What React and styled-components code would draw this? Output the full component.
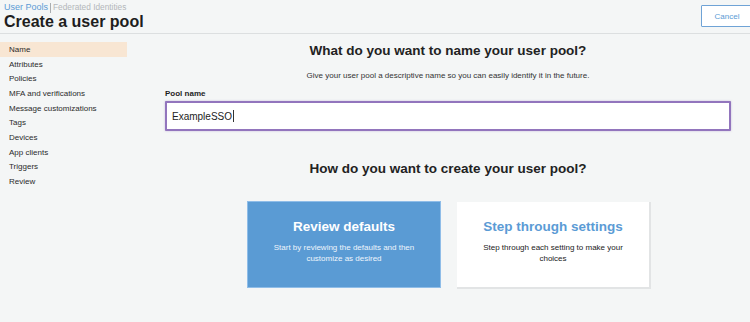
import React from "react";
import styled, { createGlobalStyle } from "styled-components";

const Global = createGlobalStyle`
  html, body { margin: 0; padding: 0; }
  body {
    background: #f4f6f6;
    font-family: "Liberation Sans", Arial, sans-serif;
    color: #222;
    overflow: hidden;
  }
`;

const Page = styled.div`
  width: 750px;
  height: 322px;
  display: flex;
  flex-direction: column;
`;

const Header = styled.header`
  height: 33px;
  border-bottom: 1px solid #dcdfe0;
  display: flex;
  justify-content: space-between;
  align-items: flex-start;
  padding-left: 4px;
  box-sizing: content-box;
`;

const TitleBlock = styled.div`
  display: flex;
  flex-direction: column;
`;

const Crumbs = styled.div`
  display: flex;
  align-items: center;
  font-size: 9px;
  line-height: 11px;
  margin-top: 2px;
`;

const CrumbLink = styled.span`
  color: ${(p) => (p.$active ? "#5b9bd5" : "#b3b7ba")};
  font-size: ${(p) => (p.$active ? "9px" : "8.3px")};
`;

const CrumbSep = styled.span`
  width: 1px;
  height: 10px;
  background: #a9adb0;
  margin: 0 2px;
`;

const Title = styled.h1`
  margin: 0;
  font-size: 16px;
  line-height: 18px;
  font-weight: bold;
  color: #1e1e1e;
`;

const CancelButton = styled.button`
  margin-top: 5px;
  margin-right: -3px;
  width: 52px;
  height: 22px;
  background: #fff;
  border: 1.5px solid #6fa3d6;
  border-radius: 1px;
  color: #5b9bd5;
  font-family: "Liberation Sans", Arial, sans-serif;
  font-size: 8px;
  padding: 0;
  text-align: center;
`;

const Body = styled.div`
  flex: 1;
  display: flex;
`;

const Sidebar = styled.nav`
  width: 127px;
  padding-top: 8px;
  display: flex;
  flex-direction: column;
`;

const NavItem = styled.div`
  height: 14.67px;
  line-height: 15px;
  padding-left: 9px;
  font-size: 8px;
  color: #2b2b2b;
  background: ${(p) => (p.$active ? "#f8e6d3" : "transparent")};
`;

const Main = styled.main`
  flex: 1;
  padding: 0 19px 0 38px;
  display: flex;
  flex-direction: column;
`;

const Heading = styled.h2`
  margin: ${(p) => p.$mt}px 0 0;
  font-size: 13.5px;
  line-height: 20px;
  font-weight: bold;
  text-align: center;
  color: #222;
`;

const Subtitle = styled.p`
  margin: 9px 0 0;
  font-size: 8px;
  line-height: 12px;
  text-align: center;
  color: #333;
`;

const Label = styled.label`
  margin-top: 6px;
  font-size: 8px;
  line-height: 12px;
  font-weight: bold;
  color: #1e1e1e;
`;

const InputBox = styled.div`
  margin-top: 1px;
  height: 30px;
  box-sizing: border-box;
  border: 2px solid #9275bd;
  border-radius: 1px;
  box-shadow: 0 0 2px rgba(146, 117, 189, 0.5);
  background: #fff;
  display: flex;
  align-items: center;
  padding-left: 5px;
  font-size: 10px;
  color: #222;
`;

const Caret = styled.span`
  display: inline-block;
  width: 1px;
  height: 12px;
  background: #333;
  margin-left: 1px;
`;

const Cards = styled.div`
  margin-top: 23px;
  display: flex;
  justify-content: center;
  gap: 17px;
  padding-left: 1px;
`;

const Card = styled.div`
  width: 192px;
  height: 85px;
  box-sizing: border-box;
  padding-top: 16px;
  display: flex;
  flex-direction: column;
  align-items: center;
  text-align: center;
  background: ${(p) => (p.$primary ? "#5a9bd4" : "#fff")};
  box-shadow: ${(p) =>
    p.$primary
      ? "0 0 0 1px #8fbde8"
      : "1px 1px 0 1px #e2e4e5"};
`;

const CardTitle = styled.div`
  font-size: 13.5px;
  line-height: 18px;
  font-weight: bold;
  color: ${(p) => (p.$primary ? "#fff" : "#5b9bd5")};
`;

const CardText = styled.div`
  margin-top: 6px;
  width: 150px;
  font-size: 8px;
  line-height: 11px;
  color: ${(p) => (p.$primary ? "#eef5fc" : "#222")};
`;

const navItems = [
  "Name",
  "Attributes",
  "Policies",
  "MFA and verifications",
  "Message customizations",
  "Tags",
  "Devices",
  "App clients",
  "Triggers",
  "Review",
];

export default function App() {
  return (
    <>
      <Global />
      <Page>
        <Header>
          <TitleBlock>
            <Crumbs>
              <CrumbLink $active>User Pools</CrumbLink>
              <CrumbSep />
              <CrumbLink>Federated Identities</CrumbLink>
            </Crumbs>
            <Title>Create a user pool</Title>
          </TitleBlock>
          <CancelButton>Cancel</CancelButton>
        </Header>
        <Body>
          <Sidebar>
            {navItems.map((n, i) => (
              <NavItem key={n} $active={i === 0}>
                {n}
              </NavItem>
            ))}
          </Sidebar>
          <Main>
            <Heading $mt={7}>What do you want to name your user pool?</Heading>
            <Subtitle>
              Give your user pool a descriptive name so you can easily identify it in the future.
            </Subtitle>
            <Label>Pool name</Label>
            <InputBox>
              ExampleSSO
              <Caret />
            </InputBox>
            <Heading $mt={28}>How do you want to create your user pool?</Heading>
            <Cards>
              <Card $primary>
                <CardTitle $primary>Review defaults</CardTitle>
                <CardText $primary>
                  Start by reviewing the defaults and then customize as desired
                </CardText>
              </Card>
              <Card>
                <CardTitle>Step through settings</CardTitle>
                <CardText>Step through each setting to make your choices</CardText>
              </Card>
            </Cards>
          </Main>
        </Body>
      </Page>
    </>
  );
}
